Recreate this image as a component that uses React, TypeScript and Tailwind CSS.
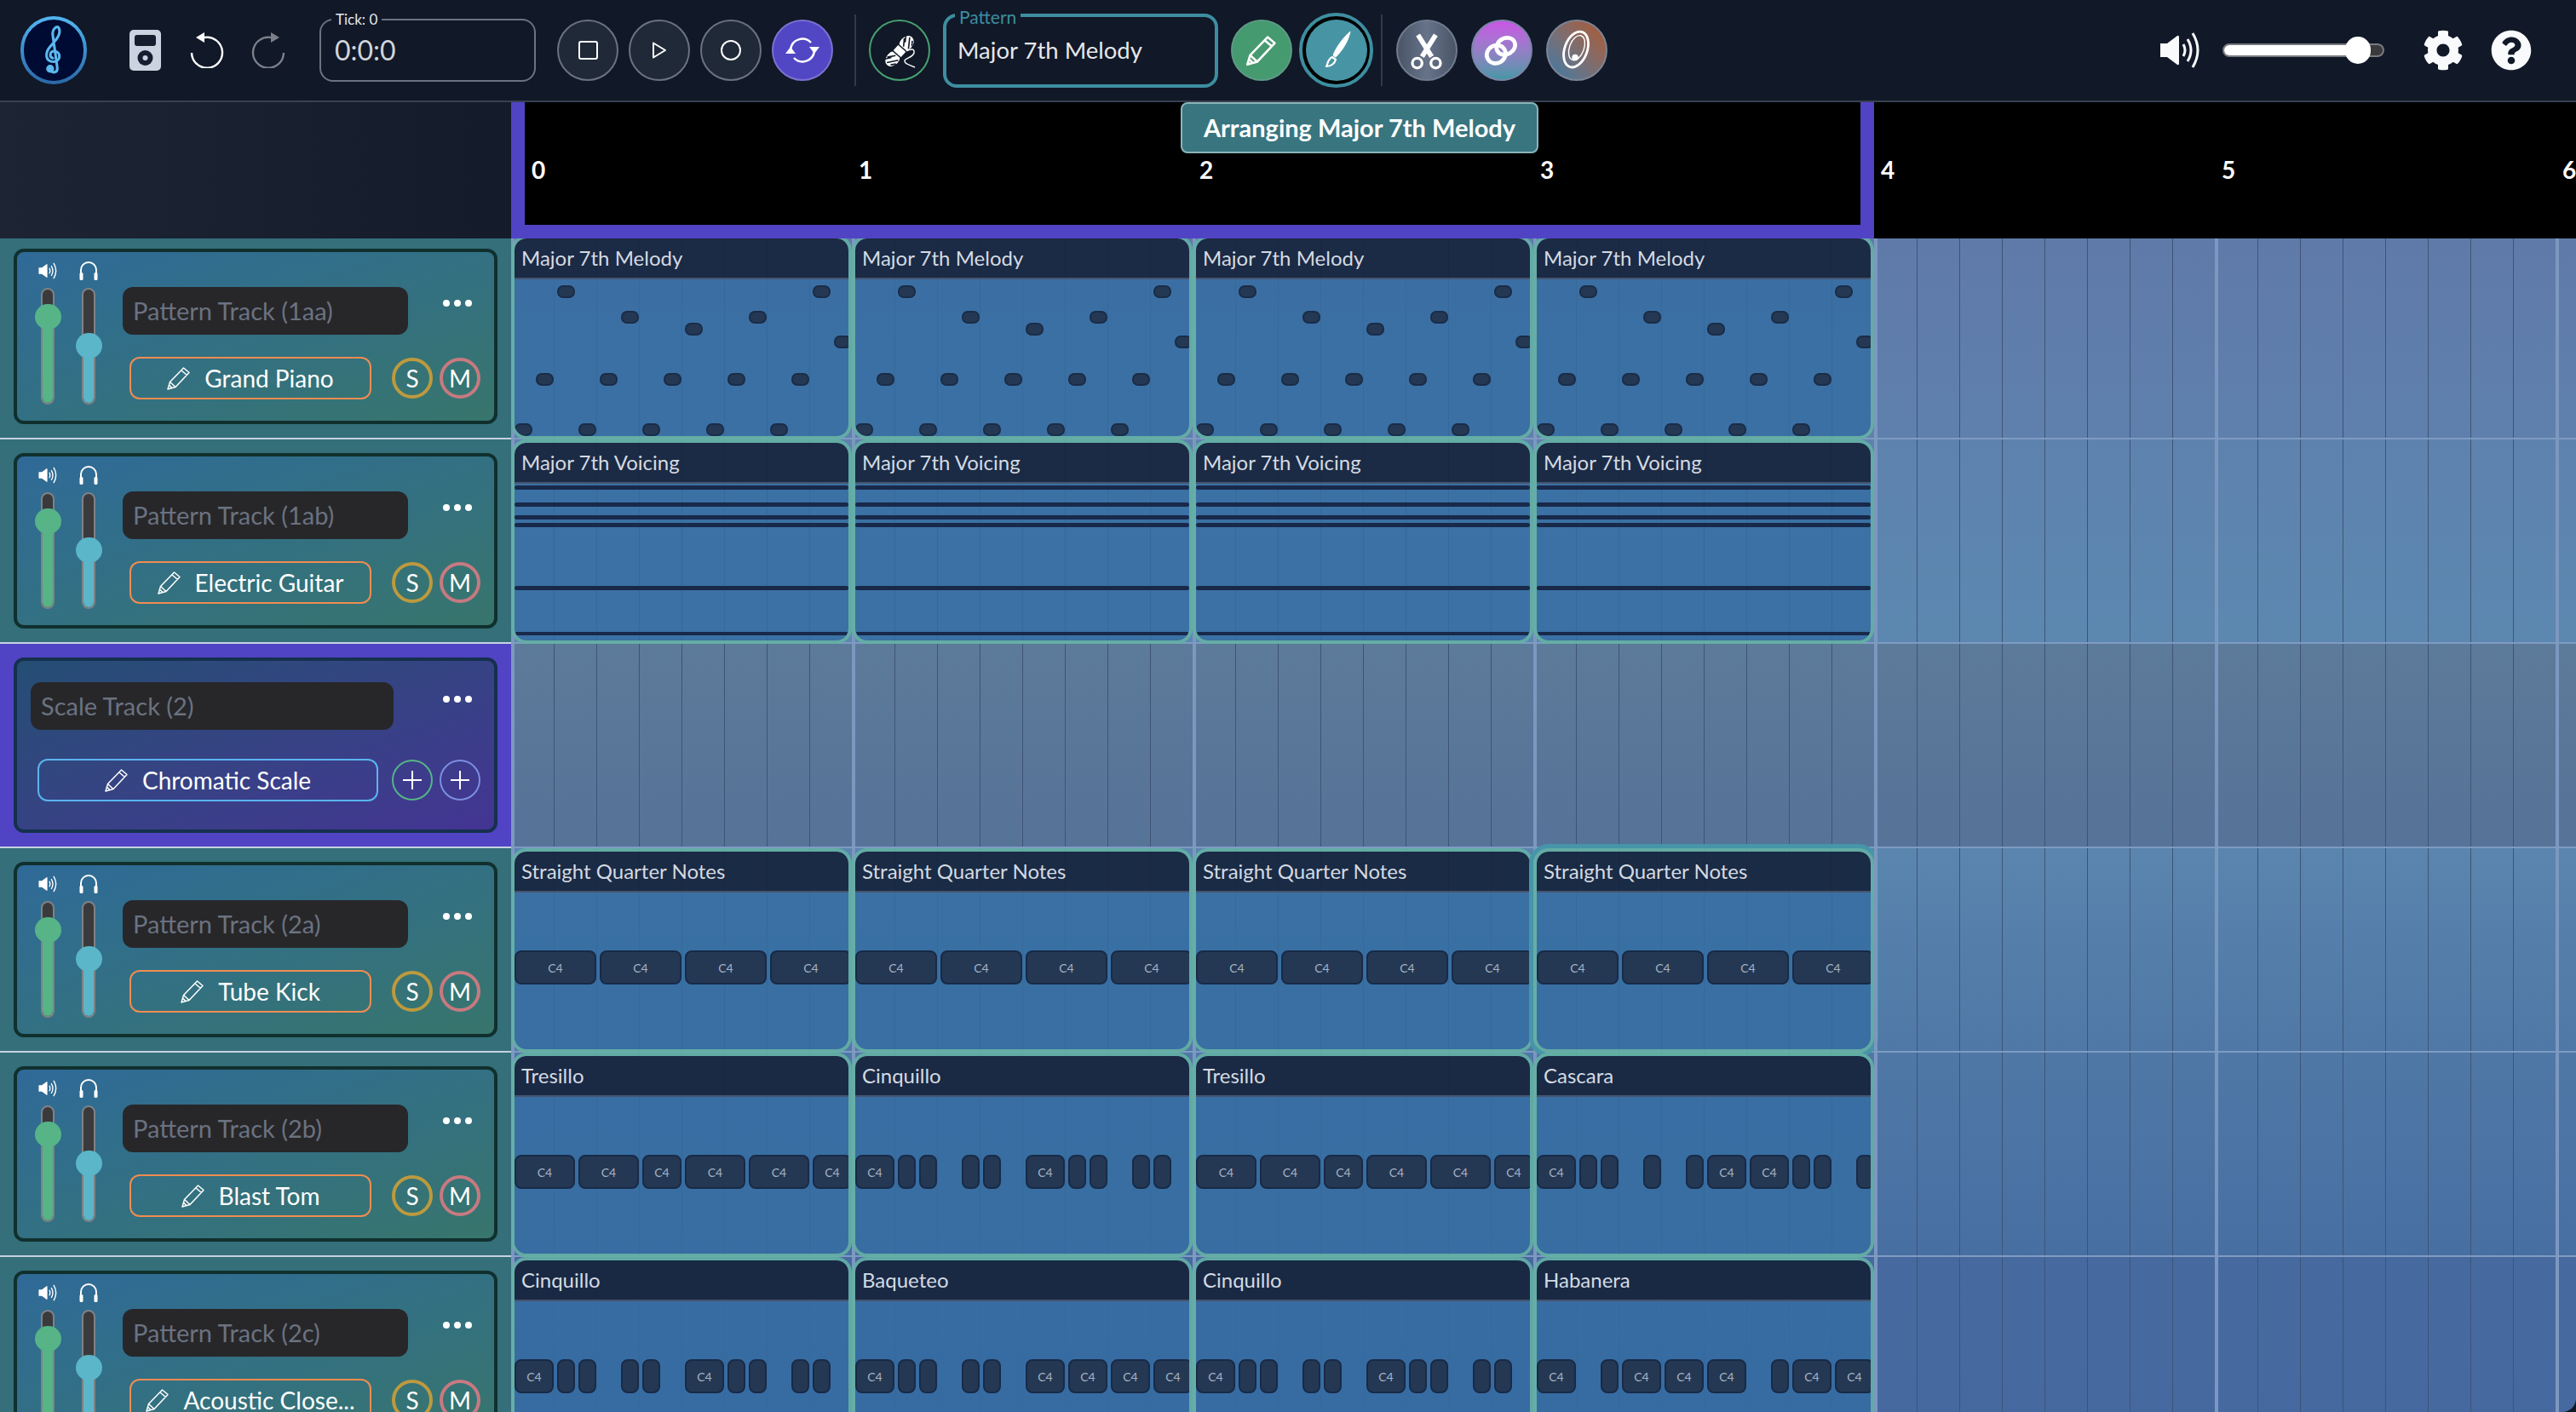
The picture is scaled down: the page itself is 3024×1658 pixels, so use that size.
import React from "react";
import { FaCog, FaQuestionCircle } from "react-icons/fa";

type N = [number, number];
const CQ: N[] = [[0,2],[2,1],[3,1],[5,1],[6,1],[8,2],[10,1],[11,1],[13,1],[14,1]];
const BAQ: N[] = [[0,2],[2,1],[3,1],[5,1],[6,1],[8,2],[10,2],[12,2],[14,2]];
const TRE: N[] = [[0,3],[3,3],[6,2],[8,3],[11,3],[14,2]];
const CAS: N[] = [[0,2],[2,1],[3,1],[5,1],[7,1],[8,2],[10,2],[12,1],[13,1],[15,1]];
const HAB: N[] = [[0,2],[3,1],[4,2],[6,2],[8,2],[11,1],[12,2],[14,2]];
const STR: N[] = [[0,4],[4,4],[8,4],[12,4]];

const MELODY: [number, number][] = [
  [0,176],[1,117],[2,14],[3,176],[4,117],[5,44],[6,176],[7,117],[8,58],[9,176],[10,117],[11,44],[12,176],[13,117],[14,14],[15,73],
];
const VOICING: [number, number][] = [[2,4],[22,4],[37,4],[46,4],[120,4],[174,3]];

function Speaker({ className }: { className: string }) {
  return (
    <svg viewBox="0 0 50 44" className={className} fill="none">
      <path d="M1 14 H9 L21 5 Q23 4 23 7 V37 Q23 40 21 39 L9 30 H1 Z" fill="currentColor" />
      <path d="M28 15 Q32 22 28 29 M33 9 Q41 22 33 35 M39 2 Q51 22 39 42" stroke="currentColor" strokeWidth="3" />
    </svg>
  );
}

function Pencil({ className, sw = 1.5 }: { className: string; sw?: number }) {
  return (
    <svg viewBox="0 0 28 28" className={className} fill="none" stroke="currentColor" strokeWidth={sw} strokeLinejoin="round">
      <path d="M1 27 L3.5 18.5 L19.5 2 L26 7.5 L10 24.5 Z M3.5 18.5 L10 24.5 M17 5 L23.5 10.5 M1 27 L6 25.5 L2.5 22 Z" />
    </svg>
  );
}

function Slider({ pct, fill, thumb }: { pct: number; fill: string; thumb: string }) {
  return (
    <div className="relative h-[137px] w-4 rounded-full border-2 border-[#7f8286] bg-[#3a3a3c]">
      <div className={`absolute inset-x-0 bottom-0 rounded-b-full ${fill}`} style={{ height: `${pct}px` }} />
      <div className={`absolute left-[-9.5px] h-[30px] w-[31px] rounded-full ${thumb}`} style={{ bottom: `${pct - 15}px` }} />
    </div>
  );
}

function Dots() {
  return (
    <div className="flex gap-[5px]">
      <div className="h-2 w-2 rounded-full bg-white" />
      <div className="h-2 w-2 rounded-full bg-white" />
      <div className="h-2 w-2 rounded-full bg-white" />
    </div>
  );
}

function Circle({ cls, children }: { cls: string; children: React.ReactNode }) {
  return <div className={`flex h-12 w-12 shrink-0 items-center justify-center rounded-full text-[28px] text-white ${cls}`}>{children}</div>;
}

function PatternCard({ name, inst }: { name: string; inst: string }) {
  return (
    <div className="flex h-[206px] items-start rounded-xl border-4 border-[#10302e] bg-linear-to-br from-[#2f6a98] to-[#38756c] pl-7">
      <div className="mt-[11px] flex w-4 flex-col items-center">
        <Speaker className="h-[22px] w-[23px] shrink-0 text-white" />
        <div className="mt-[9px]"><Slider pct={101} fill="bg-[#56b487]" thumb="bg-[#56b487]" /></div>
      </div>
      <div className="ml-8 mt-[11px] flex w-4 flex-col items-center">
        <svg viewBox="0 0 22 22" className="h-[22px] w-[22px] shrink-0 text-white" fill="none">
          <path d="M2 14 V10 A9 9 0 0 1 20 10 V14" stroke="currentColor" strokeWidth="2" />
          <rect x="0.5" y="13" width="4" height="9" rx="1.5" fill="currentColor" />
          <rect x="17.5" y="13" width="4" height="9" rx="1.5" fill="currentColor" />
        </svg>
        <div className="mt-[9px]"><Slider pct={67} fill="bg-[#5ab6c8]" thumb="bg-[#5ab6c8]" /></div>
      </div>
      <div className="ml-8 mt-[41px] flex flex-col">
        <div className="flex h-14 items-start">
          <div className="flex h-14 w-[335px] items-center rounded-xl bg-[#27272a] pl-3 text-[29px] text-[#6b7280]">{name}</div>
          <div className="ml-[41px] mt-[15px]"><Dots /></div>
        </div>
        <div className="mt-[26px] flex items-center pl-2">
          <div className="flex h-[50px] w-[284px] items-center justify-center gap-4 rounded-xl border-2 border-[#f08c50] text-[28px] text-white">
            <Pencil className="h-7 w-7" />
            <span>{inst}</span>
          </div>
          <Circle cls="ml-6 border-4 border-[#bd9a3e]">S</Circle>
          <Circle cls="ml-2 border-4 border-[#c77a80]">M</Circle>
        </div>
      </div>
    </div>
  );
}

function Plus() {
  return (
    <svg viewBox="0 0 24 24" className="h-6 w-6" fill="none" stroke="currentColor" strokeWidth="2">
      <path d="M12 1 V23 M1 12 H23" />
    </svg>
  );
}

function ScaleCard() {
  return (
    <div className="flex h-[206px] flex-col rounded-xl border-4 border-[#15304e] bg-linear-to-br from-[#244e74] to-[#433493] pl-4 pt-[25px]">
      <div className="flex h-14 items-start">
        <div className="flex h-14 w-[426px] items-center rounded-xl bg-[#27272a] pl-3 text-[29px] text-[#6b7280]">Scale Track (2)</div>
        <div className="ml-[58px] mt-[16px]"><Dots /></div>
      </div>
      <div className="mt-[34px] flex items-center pl-2">
        <div className="flex h-[50px] w-[400px] items-center justify-center gap-4 rounded-xl border-2 border-[#5ab4f0] text-[28px] text-white">
          <Pencil className="h-7 w-7" />
          <span>Chromatic Scale</span>
        </div>
        <Circle cls="ml-4 border-2 border-[#56b487]"><Plus /></Circle>
        <Circle cls="ml-2 border-2 border-[#7c8ee0]"><Plus /></Circle>
      </div>
    </div>
  );
}

function Tile({ title, children, selected }: { title: string; children: React.ReactNode; selected?: boolean }) {
  return (
    <div className={`absolute inset-x-0 bottom-[-2px] top-0 flex flex-col overflow-hidden rounded-[18px] border-4 border-[#64b0a4]/90 ${selected ? "shadow-[0_0_0_5px_#4695a8]" : ""}`}>
      <div className="flex h-12 shrink-0 items-center rounded-t-[14px] border-b-2 border-[#47556e] bg-[#17263f]/95 pl-2 text-[24px] text-[#d4dae2]">{title}</div>
      <div className="relative flex-1 overflow-hidden rounded-b-[14px] bg-[#356da2]/85">{children}</div>
    </div>
  );
}

function Rhythm({ notes, top }: { notes: N[]; top: number }) {
  return (
    <>
      {notes.map(([k, d]) => (
        <div
          key={k}
          className="absolute flex h-10 items-center justify-center rounded-lg border-2 border-[#182a47] bg-[#243854] text-[14px] text-[#a8b3c2]"
          style={{ left: `${k * 25}px`, width: `${d * 25 - 4}px`, top: `${top}px` }}
        >
          {d >= 2 ? "C4" : ""}
        </div>
      ))}
    </>
  );
}

function Melody() {
  return (
    <>
      {MELODY.map(([k, y]) => (
        <div
          key={k}
          className="absolute h-[15px] w-[21px] rounded-[7px] border-2 border-[#1a2c48] bg-[#243854]"
          style={{ left: `${k * 25}px`, top: `${y - 7.5}px` }}
        />
      ))}
    </>
  );
}

function Voicing() {
  return (
    <>
      {VOICING.map(([y, h]) => (
        <div key={y} className="absolute inset-x-0 rounded-full bg-[#18294a]" style={{ top: `${y}px`, height: `${h + 1}px` }} />
      ))}
    </>
  );
}

function Bar({ children }: { children?: React.ReactNode }) {
  return (
    <div className="relative flex h-full w-[400px] shrink-0">
      <div className="w-[50px] border-l-4 border-[#7c98c0]" />
      <div className="w-[50px] border-l border-[#3e5475]" />
      <div className="w-[50px] border-l border-[#3e5475]" />
      <div className="w-[50px] border-l border-[#3e5475]" />
      <div className="w-[50px] border-l border-[#3e5475]" />
      <div className="w-[50px] border-l border-[#3e5475]" />
      <div className="w-[50px] border-l border-[#3e5475]" />
      <div className="w-[50px] border-l border-[#3e5475]" />
      {children}
    </div>
  );
}

function GridRow({ bg, tiles }: { bg: string; tiles?: React.ReactNode[] }) {
  return (
    <div className={`flex h-full min-w-0 flex-1 overflow-visible ${bg}`}>
      <div className="flex h-full flex-1 border-b-2 border-[#7f9bc2]">
        {[0, 1, 2, 3, 4, 5, 6].map((i) => (
          <Bar key={i}>{tiles ? tiles[i] : null}</Bar>
        ))}
      </div>
    </div>
  );
}

function Row({ left, grid, leftBg }: { left: React.ReactNode; grid: React.ReactNode; leftBg: string }) {
  return (
    <div className="flex h-[240px] shrink-0">
      <div className={`w-[600px] shrink-0 border-b-2 border-[#c5d3e0] px-4 py-4 ${leftBg}`}>{left}</div>
      {grid}
    </div>
  );
}

function Round({ cls, children }: { cls: string; children?: React.ReactNode }) {
  return <div className={`flex h-[72px] w-[72px] shrink-0 items-center justify-center rounded-full border-2 ${cls}`}>{children}</div>;
}

function Header() {
  return (
    <div className="flex h-[120px] shrink-0 items-center border-b-2 border-[#374151] bg-[#111827]">
      <div className="ml-6 flex h-20 w-[78px] shrink-0 items-center justify-center rounded-full bg-linear-to-b from-[#52b6f2] to-[#2b68a8] p-1">
        <div className="flex h-full w-full items-center justify-center rounded-full bg-[#000b33]">
          <svg viewBox="0 0 24 58" className="h-[60px] w-[26px]" fill="none" stroke="#5ab8ee" strokeWidth="3" strokeLinecap="round">
            <path d="M8 50 C 10 56, 17 55, 16 48 L 11 12 C 10 5, 16 0, 18 4 C 21 11, 14 18, 8 25 C 2 32, 2 42, 12 42 C 20 42, 21 31, 13 30 C 7 30, 7 37, 11 38" />
            <circle cx="8" cy="50" r="3" fill="#5ab8ee" />
          </svg>
        </div>
      </div>
      <svg viewBox="0 0 37 48" className="ml-[50px] h-12 w-[37px] shrink-0">
        <rect width="37" height="48" rx="5" fill="#cbd2e0" />
        <rect x="6" y="6" width="25" height="13" rx="3" fill="#161d2e" />
        <circle cx="18.5" cy="33" r="9" fill="#161d2e" />
        <circle cx="18.5" cy="33" r="3" fill="#cbd2e0" />
      </svg>
      <svg viewBox="0 0 40 42" className="ml-[34px] h-[42px] w-[40px] shrink-0">
        <path d="M17 6 A18 18 0 1 1 2 24" fill="none" stroke="white" strokeWidth="2.4" />
        <path d="M7 6 L17 0 V12 Z" fill="white" />
      </svg>
      <svg viewBox="0 0 40 42" className="ml-8 h-[42px] w-[40px] shrink-0">
        <path d="M23 6 A18 18 0 1 0 38 24" fill="none" stroke="#7b808a" strokeWidth="2.4" />
        <path d="M33 6 L23 0 V12 Z" fill="#7b808a" />
      </svg>
      <div className="relative ml-[40px] flex h-[74px] w-[254px] shrink-0 items-center rounded-2xl border-2 border-[#6b7280] pl-4 text-[32px] text-[#d1d5db]">
        0:0:0
        <span className="absolute left-[12px] top-[-9px] bg-[#111827] px-[5px] text-[17px] leading-4 text-[#e5e7eb]">Tick: 0</span>
      </div>
      <Round cls="ml-[25px] border-[#6b7280] bg-[#1f2937]">
        <div className="h-[22px] w-[23px] rounded-[3px] border-[2.5px] border-white" />
      </Round>
      <Round cls="ml-3 border-[#6b7280] bg-[#1f2937]">
        <svg viewBox="0 0 18 20" className="h-5 w-[18px]" fill="none" stroke="white" strokeWidth="2"><path d="M2 1.5 L16 10 L2 18.5 Z" strokeLinejoin="round" /></svg>
      </Round>
      <Round cls="ml-3 border-[#6b7280] bg-[#1f2937]">
        <div className="h-6 w-6 rounded-full border-[2.5px] border-white" />
      </Round>
      <Round cls="ml-3 border-[#7c72d0] bg-[#5146c4]">
        <svg viewBox="0 0 40 32" className="h-8 w-10" fill="none">
          <path d="M6 15 A14 14 0 0 1 30 7 M34 17 A14 14 0 0 1 10 25" stroke="white" strokeWidth="2.5" />
          <path d="M0 20 H12 L6 12 Z M28 12 H40 L34 20 Z" fill="white" />
        </svg>
      </Round>
      <div className="ml-[25px] h-[84px] w-0.5 shrink-0 bg-[#2f3a4d]" />
      <Round cls="ml-[15px] border-[#46a070] bg-transparent">
        <svg viewBox="0 0 68 68" className="h-[68px] w-[68px]" fill="none">
          <g transform="translate(34 35) rotate(-48)">
            <ellipse cx="-12" cy="0" rx="10" ry="7.5" fill="white" />
            <ellipse cx="12" cy="0" rx="10" ry="7.5" fill="white" />
            <rect x="-4.5" y="-6" width="9" height="12" fill="white" />
            <path d="M-5 -8 V8" stroke="#111827" strokeWidth="1.4" />
            <path d="M5 -8 V8" stroke="#111827" strokeWidth="1.4" />
            <path d="M-19 -7 L-12 -2 M-20 -2 L-9 6 M-15 -6 L-7 0 M-19 3 L-14 7 M19 -7 L12 -2 M20 -2 L9 6 M15 -6 L7 0 M19 3 L14 7" stroke="#111827" strokeWidth="1.6" />
          </g>
          <path d="M42 35 C 47 32, 52 32, 51 37 C 50 42, 42 43, 40 46 C 39 50, 46 51, 52 54" stroke="white" strokeWidth="1.4" />
        </svg>
      </Round>
      <div className="relative ml-[15px] flex h-[87px] w-[323px] shrink-0 items-center rounded-2xl border-4 border-[#3d8ea0] pl-[13px] text-[27.5px] text-[#e5e7eb]">
        Major 7th Melody
        <span className="absolute left-[10px] top-[-10px] bg-[#111827] px-[5px] text-[21px] leading-5 text-[#3d8ea0]">Pattern</span>
      </div>
      <Round cls="ml-[15px] border-[#5c9b85] bg-[#459a6f]">
        <Pencil className="h-9 w-9 text-white" sw={2} />
      </Round>
      <div className="ml-2 flex h-[88px] w-[87px] shrink-0 items-center justify-center rounded-full border-4 border-[#3d8ea0] bg-black">
        <div className="flex h-[72px] w-[72px] items-center justify-center rounded-full bg-[#4794a4]">
          <svg viewBox="0 0 40 46" className="h-[46px] w-10">
            <path d="M36 1 C 28 8, 19 20, 16 29 L 19 31 C 27 23, 34 12, 36 1 Z" fill="white" stroke="white" strokeWidth="1" />
            <path d="M15 31 L19 34 C 18 38, 14 42, 8 42 C 10 39, 9 34, 15 31 Z" fill="none" stroke="white" strokeWidth="2.2" strokeLinejoin="round" />
          </svg>
        </div>
      </div>
      <div className="ml-[9px] h-[84px] w-0.5 shrink-0 bg-[#2f3a4d]" />
      <Round cls="ml-4 border-[#6f7b8f] bg-linear-to-r from-[#4b5568] via-[#667389] to-[#4b5568]">
        <svg viewBox="0 0 72 72" className="h-[72px] w-[72px]" fill="none" stroke="white">
          <path d="M25 17 L42 44 M47 17 L30 44" strokeWidth="6" />
          <circle cx="24" cy="52" r="6" strokeWidth="3.5" />
          <circle cx="47" cy="52" r="6" strokeWidth="3.5" />
        </svg>
      </Round>
      <Round cls="ml-4 border-[#7a86a8] bg-linear-to-b from-[#c955e6] to-[#4297a6]">
        <svg viewBox="0 0 72 72" className="h-[72px] w-[72px]" fill="none" stroke="white">
          <ellipse cx="29" cy="41" rx="12" ry="11" transform="rotate(-30 29 41)" strokeWidth="5" />
          <ellipse cx="41" cy="31" rx="12" ry="10" transform="rotate(-30 41 31)" strokeWidth="5" />
        </svg>
      </Round>
      <Round cls="ml-4 border-[#7d8496] bg-linear-to-bl from-[#ad5526] to-[#2f7aa8]">
        <svg viewBox="0 0 72 72" className="h-[72px] w-[72px]" fill="none" stroke="white">
          <ellipse cx="35" cy="35" rx="14" ry="23" transform="rotate(20 35 35)" strokeWidth="3" />
          <ellipse cx="36" cy="33" rx="9" ry="16" transform="rotate(20 36 33)" strokeWidth="1.5" />
          <circle cx="34" cy="45" r="4" fill="white" strokeWidth="0" />
        </svg>
      </Round>
      <div className="flex-1" />
      <Speaker className="h-[44px] w-[50px] shrink-0 text-[#f8fafc]" />
      <div className="relative ml-6 h-4 w-[190px] shrink-0 rounded-full border-2 border-[#777b80] bg-[#3a3a3c]">
        <div className="absolute inset-y-0 left-0 w-[160px] rounded-l-full bg-white" />
        <div className="absolute left-[142px] top-[-10px] h-8 w-[30px] rounded-full bg-white" />
      </div>
      <FaCog className="ml-[45px] h-12 w-12 shrink-0 text-[#f8fafc]" />
      <FaQuestionCircle className="ml-8 mr-[52px] h-12 w-12 shrink-0 text-[#f8fafc]" />
    </div>
  );
}

function Ruler() {
  return (
    <div className="relative z-10 flex h-[160px] shrink-0">
      <div className="w-[600px] shrink-0 bg-linear-to-r from-[#1d2535] to-[#141b2b]" />
      <div className="relative flex min-w-0 flex-1 items-center overflow-hidden bg-black pb-0.5 text-[28px] font-bold text-white">
        <div className="w-[400px] shrink-0 pl-6">0</div>
        <div className="w-[400px] shrink-0 pl-2">1</div>
        <div className="w-[400px] shrink-0 pl-2">2</div>
        <div className="w-[400px] shrink-0 pl-2">3</div>
        <div className="w-[400px] shrink-0 pl-2">4</div>
        <div className="w-[400px] shrink-0 pl-2">5</div>
        <div className="w-[24px] shrink-0 pl-2">6</div>
        <div className="absolute inset-y-0 left-0 w-[1600px] border-x-[16px] border-b-[16px] border-[#5044c4]" />
      </div>
    </div>
  );
}

export default function App() {
  const teal = "bg-[#346f7a]";
  return (
    <div
      className="relative flex h-[1658px] w-[3024px] flex-col overflow-hidden bg-[#111827]"
      style={{ fontFamily: "Lato, 'Noto Sans', sans-serif" }}
    >
      <Header />
      <Ruler />
      <div className="absolute left-[1386px] top-[120px] z-20 flex h-[60px] w-[420px] items-center justify-center rounded-lg border-2 border-[#8ab4b8] bg-[#38757f] text-[29px] font-bold text-white">
        Arranging Major 7th Melody
      </div>
      <div className="-mt-1 flex flex-1 flex-col overflow-hidden rounded-br-2xl">
        <Row
          leftBg={teal}
          left={<PatternCard name="Pattern Track (1aa)" inst="Grand Piano" />}
          grid={<GridRow bg="bg-linear-to-b from-[#5f7aa9] to-[#5f80ad]" tiles={[0,1,2,3].map((i) => <Tile key={i} title="Major 7th Melody"><Melody /></Tile>)} />}
        />
        <Row
          leftBg={teal}
          left={<PatternCard name="Pattern Track (1ab)" inst="Electric Guitar" />}
          grid={<GridRow bg="bg-linear-to-b from-[#5e82ae] to-[#5c88b0]" tiles={[0,1,2,3].map((i) => <Tile key={i} title="Major 7th Voicing"><Voicing /></Tile>)} />}
        />
        <Row
          leftBg="bg-[#5044c4]"
          left={<ScaleCard />}
          grid={<GridRow bg="bg-linear-to-b from-[#5c7a99] to-[#567398]" />}
        />
        <Row
          leftBg={teal}
          left={<PatternCard name="Pattern Track (2a)" inst="Tube Kick" />}
          grid={<GridRow bg="bg-linear-to-b from-[#5a85ae] to-[#4f78a6]" tiles={[0,1,2,3].map((i) => <Tile key={i} title="Straight Quarter Notes" selected={i === 3}><Rhythm notes={STR} top={68} /></Tile>)} />}
        />
        <Row
          leftBg={teal}
          left={<PatternCard name="Pattern Track (2b)" inst="Blast Tom" />}
          grid={<GridRow bg="bg-linear-to-b from-[#4f78a6] to-[#486fa2]" tiles={[
            <Tile key={0} title="Tresillo"><Rhythm notes={TRE} top={68} /></Tile>,
            <Tile key={1} title="Cinquillo"><Rhythm notes={CQ} top={68} /></Tile>,
            <Tile key={2} title="Tresillo"><Rhythm notes={TRE} top={68} /></Tile>,
            <Tile key={3} title="Cascara"><Rhythm notes={CAS} top={68} /></Tile>,
          ]} />}
        />
        <Row
          leftBg={teal}
          left={<PatternCard name="Pattern Track (2c)" inst="Acoustic Close..." />}
          grid={<GridRow bg="bg-linear-to-b from-[#466aa0] to-[#4668a0]" tiles={[
            <Tile key={0} title="Cinquillo"><Rhythm notes={CQ} top={68} /></Tile>,
            <Tile key={1} title="Baqueteo"><Rhythm notes={BAQ} top={68} /></Tile>,
            <Tile key={2} title="Cinquillo"><Rhythm notes={CQ} top={68} /></Tile>,
            <Tile key={3} title="Habanera"><Rhythm notes={HAB} top={68} /></Tile>,
          ]} />}
        />
      </div>
    </div>
  );
}
